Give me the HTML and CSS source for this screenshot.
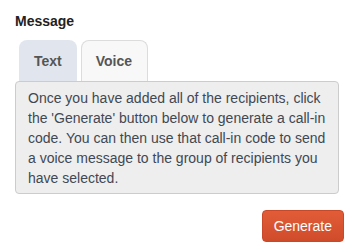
FILE: index.html
```html
<!DOCTYPE html>
<html>
<head>
<meta charset="utf-8">
<link rel="stylesheet" href="styles.css">
</head>
<body>
<div class="page">
  <div class="label">Message</div>
  <div class="tabs">
    <div class="tab tab-text">Text</div>
    <div class="tab tab-voice">Voice</div>
  </div>
  <div class="panel">Once you have added all of the recipients, click the 'Generate' button below to generate a call-in code. You can then use that call-in code to send a voice message to the group of recipients you have selected.</div>
  <div class="actions">
    <button class="btn">Generate</button>
  </div>
</div>
</body>
</html>
```

FILE: styles.css
```css
html, body {
  margin: 0;
  padding: 0;
  background: #ffffff;
}
body {
  font-family: "Liberation Sans", Arial, sans-serif;
  font-size: 14px;
  line-height: 20px;
}
.page {
  padding: 11px 8px 0 15px;
}
.label {
  font-weight: bold;
  color: #222;
  margin-bottom: 9px;
}
.tabs {
  display: flex;
  gap: 4px;
  padding-left: 4px;
}
.tab {
  padding: 10px 14px;
  font-weight: bold;
  color: #555;
  border: 1px solid transparent;
  border-bottom: 0;
  border-radius: 8px 8px 0 0;
}
.tab-text {
  background: #e1e5ee;
}
.tab-voice {
  background: #f8f8f8;
  border-color: #dcdcdc;
  padding-right: 15px;
}
.panel {
  margin-right: 5px;
  background: #eeeeee;
  border: 1px solid #cccccc;
  border-radius: 4px;
  padding: 6px 12px 5px 12px;
  color: #3f4853;
}
.actions {
  display: flex;
  justify-content: flex-end;
  margin-top: 16px;
}
.btn {
  font-family: "Liberation Sans", Arial, sans-serif;
  font-size: 14px;
  line-height: 20px;
  color: #ffffff;
  background: linear-gradient(#e25c37, #cf4c2b);
  border: 1px solid #c9482a;
  border-radius: 4px;
  padding: 5px 11px;
}
```
